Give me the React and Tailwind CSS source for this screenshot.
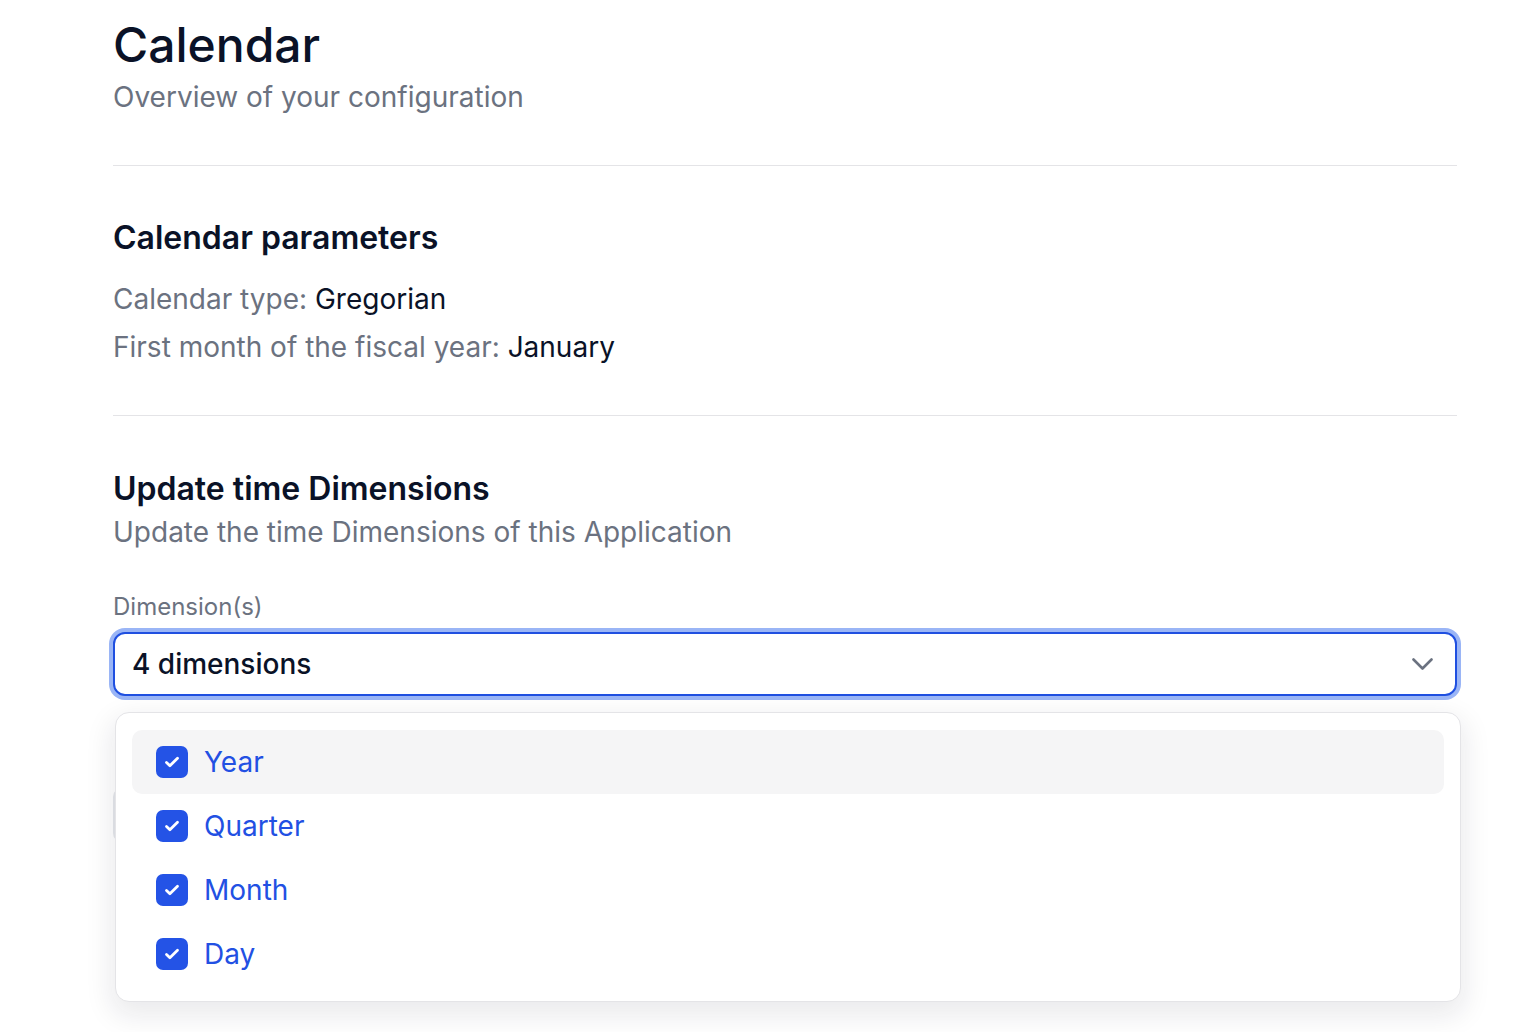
import React from 'react'

const dims = ['Year', 'Quarter', 'Month', 'Day']

function Check() {
    return (
        <span className="flex h-[32px] w-[32px] shrink-0 items-center justify-center rounded-[7px] bg-[#2453e6]">
            <svg className="h-[20px] w-[20px]" viewBox="0 0 20 20" fill="none" aria-hidden="true">
                <path d="M4.5 10.5l3.4 3.2L15.5 6.3" stroke="white" strokeWidth="2.8" strokeLinecap="round" strokeLinejoin="round" />
            </svg>
        </span>
    )
}

function DimensionSelect() {
    return (
        <div className="relative">
            <button
                type="button"
                className="flex h-[64px] w-full items-center justify-between rounded-[12px] border-2 border-[#1f4fe0] bg-white pl-[17px] pr-[22px] ring-4 ring-[#9ab5f6]"
            >
                <span className="text-[28px] font-medium text-[#0a1227]">4 dimensions</span>
                <svg className="h-[12px] w-[21px]" viewBox="0 0 21 12" fill="none" aria-hidden="true">
                    <path d="M1.5 1.5l9 9 9-9" stroke="#6b7280" strokeWidth="2.6" strokeLinecap="round" strokeLinejoin="round" />
                </svg>
            </button>

            {/* whatever sits under the open menu */}
            <div className="mt-[91px] h-[56px] w-[220px] rounded-[10px] border-2 border-[#e5e7eb]" />

            <div className="absolute left-[2px] right-[-4px] top-[80px] rounded-[14px] border border-[#e4e4e7] bg-white px-4 pt-[17px] pb-[15px] shadow-[0_10px_28px_4px_rgba(17,24,39,0.09)]">
                {dims.map((d, i) => (
                    <div
                        key={d}
                        className={
                            i === 0
                                ? 'flex h-[64px] items-center gap-4 rounded-[10px] bg-[#f5f5f6] pl-6'
                                : 'flex h-[64px] items-center gap-4 rounded-[10px] pl-6'
                        }
                    >
                        <Check />
                        <span className="text-[28px] text-[#2250e3]">{d}</span>
                    </div>
                ))}
            </div>
        </div>
    )
}

export default function App() {
    return (
        <div className="min-h-screen bg-white pl-[113px] pr-[83px] pt-[17px] font-['Inter','Noto_Sans',sans-serif]">
            <h1 className="text-[48px] font-medium leading-[56px] text-[#0a1227]">Calendar</h1>
            <p className="mt-1 text-[28px] leading-[40px] text-[#6b7280]">Overview of your configuration</p>

            <div className="mt-12 border-t border-[#e4e4e7]" />

            <h2 className="mt-[48px] text-[32px] font-semibold leading-[48px] text-[#0a1227]">Calendar parameters</h2>
            <div className="mt-[13px] text-[28px] leading-[48px]">
                <p className="text-[#6b7280]">
                    Calendar type: <span className="text-[#0a1227]">Gregorian</span>
                </p>
                <p className="text-[#6b7280]">
                    First month of the fiscal year: <span className="text-[#0a1227]">January</span>
                </p>
            </div>

            <div className="mt-[44px] border-t border-[#e4e4e7]" />

            <h2 className="mt-[49px] text-[32px] font-semibold leading-[48px] text-[#0a1227]">Update time Dimensions</h2>
            <p className="-mt-[2px] text-[28px] leading-[42px] text-[#6b7280]">Update the time Dimensions of this Application</p>

            <label className="mt-[37px] block text-[24px] leading-[34px] text-[#6b7280]">Dimension(s)</label>
            <div className="mt-2">
                <DimensionSelect />
            </div>
        </div>
    )
}
